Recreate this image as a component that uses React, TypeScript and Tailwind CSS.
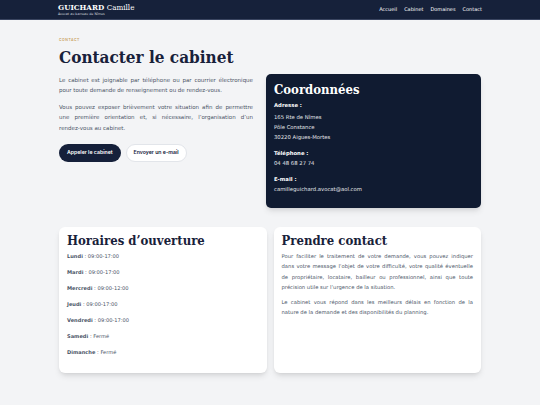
export default function App() {
  const serif = { fontFamily: '"DejaVu Serif Condensed", "DejaVu Serif", Georgia, serif' }
  const hours = [
    ["Lundi", "09:00-17:00"],
    ["Mardi", "09:00-17:00"],
    ["Mercredi", "09:00-12:00"],
    ["Jeudi", "09:00-17:00"],
    ["Vendredi", "09:00-17:00"],
    ["Samedi", "Fermé"],
    ["Dimanche", "Fermé"],
  ]

  return (
    <div className="min-h-[405px] bg-[#f3f4f6] text-[#4b5567]" style={{ fontFamily: '"DejaVu Sans", sans-serif' }}>
      {/* header */}
      <header className="h-[20px] bg-[#16213a] border-b border-[#3a4560]">
        <div className="mx-auto flex h-full w-[424px] items-center justify-between">
          <div className="leading-none">
            <div className="text-[8px] font-bold text-white" style={serif}>
              GUICHARD <span className="font-normal">Camille</span>
            </div>
            <div className="mt-[1px] text-[3.3px] text-gray-300">Avocat au barreau de Nîmes</div>
          </div>
          <nav className="flex gap-[7px] text-[5px] text-white">
            <span>Accueil</span>
            <span>Cabinet</span>
            <span>Domaines</span>
            <span>Contact</span>
          </nav>
        </div>
      </header>

      <main className="mx-auto w-[422px] pt-[18px]">
        <section className="flex items-start gap-[13px]">
          <div className="flex-1">
            <div className="text-[3.5px] font-semibold uppercase tracking-[0.15em] text-[#c9a05c]" style={{ fontFamily: '"Inter", sans-serif' }}>Contact</div>
            <h1 className="mt-[4px] text-[17px] font-bold leading-tight text-[#18213a]" style={serif}>
              Contacter le cabinet
            </h1>
            <p className="mt-[6px] text-justify text-[5.5px] leading-[10.5px]">
              Le cabinet est joignable par téléphone ou par courrier électronique pour toute demande de renseignement ou de rendez‑vous.
            </p>
            <p className="mt-[6px] text-justify text-[5.5px] leading-[10.5px]">
              Vous pouvez exposer brièvement votre situation afin de permettre une première orientation et, si nécessaire, l’organisation d’un rendez‑vous au cabinet.
            </p>
            <div className="mt-[11px] flex gap-[5px] text-[5.2px] font-semibold" style={{ fontFamily: '"Inter", sans-serif' }}>
              <span className="rounded-full bg-[#15203a] px-[8px] py-[4.5px] text-white">Appeler le cabinet</span>
              <span className="rounded-full border border-[#e2e5ea] bg-white px-[7px] py-[4px] text-[#15203a]">Envoyer un e-mail</span>
            </div>
          </div>

          <div className="mt-[36px] w-[215px] rounded-[5px] bg-[#101b31] px-[8px] pt-[8px] pb-[14px] text-[5.3px] leading-[10px] text-white shadow-md">
            <h2 className="text-[13px] font-bold leading-[16px]" style={serif}>Coordonnées</h2>
            <div className="mt-[2px] font-semibold">Adresse :</div>
            <div className="mt-[2px] text-gray-200">
              165 Rte de Nîmes<br />Pôle Constance<br />30220 Aigues-Mortes
            </div>
            <div className="mt-[6px] font-semibold">Téléphone :</div>
            <div className="text-gray-200">04 48 68 27 74</div>
            <div className="mt-[6px] font-semibold">E-mail :</div>
            <div className="text-gray-200">camilleguichard.avocat@aol.com</div>
          </div>
        </section>

        <section className="mt-[19px] grid grid-cols-2 gap-[7px]">
          <div className="h-[146px] rounded-[6px] bg-white px-[8px] pt-[6px] shadow-md">
            <h2 className="text-[13px] font-bold leading-[16px] text-[#18213a]" style={serif}>Horaires d’ouverture</h2>
            <ul className="mt-[2px] space-y-[6px] text-[5.1px] leading-[10px]">
              {hours.map(([d, h]) => (
                <li key={d}>
                  <span className="font-semibold">{d}</span> : {h}
                </li>
              ))}
            </ul>
          </div>
          <div className="h-[146px] rounded-[6px] bg-white px-[8px] pt-[6px] shadow-md">
            <h2 className="text-[13px] font-bold leading-[16px] text-[#18213a]" style={serif}>Prendre contact</h2>
            <p className="mt-[2px] text-justify text-[5.25px] leading-[10.3px]">
              Pour faciliter le traitement de votre demande, vous pouvez indiquer dans votre message l’objet de votre difficulté, votre qualité éventuelle de propriétaire, locataire, bailleur ou professionnel, ainsi que toute précision utile sur l’urgence de la situation.
            </p>
            <p className="mt-[5px] text-justify text-[5.25px] leading-[10.3px]">
              Le cabinet vous répond dans les meilleurs délais en fonction de la nature de la demande et des disponibilités du planning.
            </p>
          </div>
        </section>
      </main>
    </div>
  )
}
